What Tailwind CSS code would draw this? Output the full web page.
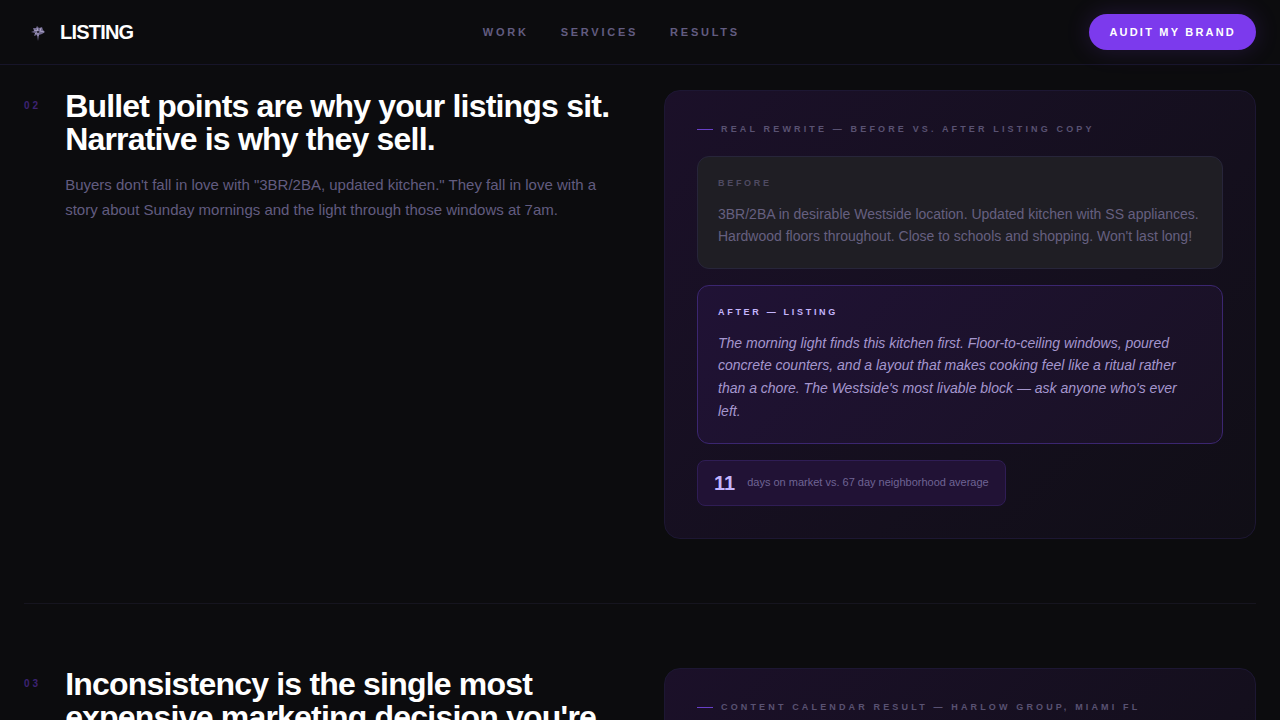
<!DOCTYPE html>
<html lang="en">
  <head>
    <meta charset="UTF-8" />
    <meta name="viewport" content="width=device-width, initial-scale=1.0" />
    <title>Listing</title>
    <script src="https://cdn.jsdelivr.net/npm/@tailwindcss/browser@4"></script>
  </head>
  <body class="bg-[#0c0c0e] text-white font-['Liberation_Sans',Arial,sans-serif]">
    <header class="sticky top-0 z-10 bg-[#0c0c0e] border-b border-[#171529]">
      <div class="flex items-center justify-between h-16 px-6">
        <a href="#" class="flex items-center gap-2">
          <svg class="size-7" viewBox="0 0 28 28" aria-hidden="true">
            <path d="M13 8l2 2 3-1 1 3 2 2-3 2-3 1-1 6-1-6-3 1 1-3-4-1 3-1-1-3 3 0z" fill="#6f678c" />
            <path d="M13 10l1 3-4-1m7-2l-1 3 4 1m-9 2l3-2 0 4" fill="none" stroke="#aaa3c4" stroke-width="1" />
            <circle cx="14" cy="14" r="1" fill="#17131f" />
          </svg>
          <span class="text-xl font-bold tracking-[-0.04em]">LISTING</span>
        </a>

        <nav class="flex gap-8 text-[11px] font-bold tracking-[0.25em] text-[#625c80]">
          <a href="#work">WORK</a>
          <a href="#services">SERVICES</a>
          <a href="#results">RESULTS</a>
        </nav>

        <button class="h-9 px-5 rounded-full bg-[#7c3aed] text-[11px] font-bold tracking-[0.2em] shadow-[0_0_24px_rgba(124,58,237,0.2)]">
          AUDIT MY BRAND
        </button>
      </div>
    </header>

    <main class="px-6 pt-[25px] pb-16">
      <section class="grid grid-cols-2 gap-12 pb-16 border-b border-[#16151f]">
        <div class="flex items-start gap-6">
          <span class="pt-2 text-[10px] font-bold tracking-[0.3em] text-[#3d2373]">02</span>
          <div>
            <h2 class="mb-4 text-[32px] leading-[33px] font-bold tracking-tight">
              Bullet points are why your listings sit. Narrative is why they sell.
            </h2>
            <p class="text-[15px] leading-[25px] text-[#625c80]">
              Buyers don't fall in love with "3BR/2BA, updated kitchen." They fall in love with a story about Sunday
              mornings and the light through those windows at 7am.
            </p>
          </div>
        </div>

        <div class="p-8 rounded-2xl border border-[#1d1733] bg-linear-135 from-[#1b1029] to-[#100e16]">
          <div class="flex items-center gap-2 mb-5 text-[9px] leading-[13px] font-bold tracking-[0.35em] text-[#595272]">
            <span class="w-4 h-px bg-[#6840c8]"></span>
            REAL REWRITE — BEFORE VS. AFTER LISTING COPY
          </div>

          <div class="mb-4 p-5 rounded-xl border border-[#27253a] bg-[#1f1e24]">
            <div class="mb-3 text-[9px] font-bold tracking-[0.3em] text-[#4f4b62]">BEFORE</div>
            <p class="text-sm leading-relaxed text-[#666080]">
              3BR/2BA in desirable Westside location. Updated kitchen with SS appliances. Hardwood floors throughout.
              Close to schools and shopping. Won't last long!
            </p>
          </div>

          <div class="mb-4 p-5 rounded-xl border border-[#3b2670] bg-linear-135 from-[#201235] to-[#191124]">
            <div class="mb-3 text-[9px] font-bold tracking-[0.3em] text-[#c4b5fd]">AFTER — LISTING</div>
            <p class="text-sm leading-relaxed italic text-[#a596ce]">
              The morning light finds this kitchen first. Floor-to-ceiling windows, poured concrete counters, and a
              layout that makes cooking feel like a ritual rather than a chore. The Westside's most livable block — ask
              anyone who's ever left.
            </p>
          </div>

          <div class="inline-flex items-center gap-3 px-4 py-2 rounded-lg border border-[#2f1d55] bg-[#211235] align-top">
            <span class="text-xl font-bold text-[#c4b5fd]">11</span>
            <span class="text-[11px] text-[#6f6494]">days on market vs. 67 day neighborhood average</span>
          </div>
        </div>
      </section>

      <section class="grid grid-cols-2 gap-12 pt-16">
        <div class="flex items-start gap-6">
          <span class="pt-2 text-[10px] font-bold tracking-[0.3em] text-[#3d2373]">03</span>
          <h2 class="text-[32px] leading-[33px] font-bold tracking-tight">
            Inconsistency is the single most expensive marketing decision you're
          </h2>
        </div>

        <div class="min-h-96 p-8 rounded-2xl border border-[#1d1733] bg-linear-135 from-[#1b1029] to-[#100e16]">
          <div class="flex items-center gap-2 text-[9px] leading-[13px] font-bold tracking-[0.35em] text-[#595272]">
            <span class="w-4 h-px bg-[#6840c8]"></span>
            CONTENT CALENDAR RESULT — HARLOW GROUP, MIAMI FL
          </div>
        </div>
      </section>
    </main>
  </body>
</html>
